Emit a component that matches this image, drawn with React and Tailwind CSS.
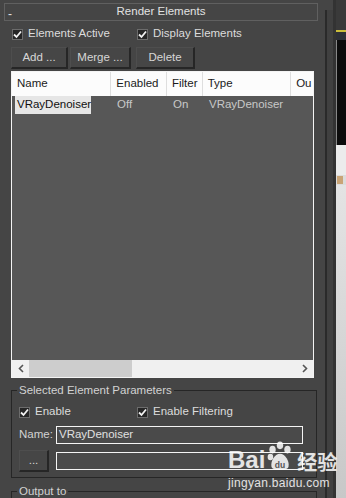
import React from 'react';

const font = { fontFamily: '"Liberation Sans", Arial, sans-serif' };

function Check({ label, className = '' }) {
  return (
    <div className={`flex items-center gap-[5px] ${className}`}>
      <div className="w-[11px] h-[11px] bg-[#262626] border border-[#6c6c6c] flex items-center justify-center">
        <svg width="9" height="9" viewBox="0 0 9 9">
          <path d="M1 4.5 L3.5 7 L8 1.5" stroke="#f2f2f2" strokeWidth="1.8" fill="none" />
        </svg>
      </div>
      <span className="text-[11.5px] text-[#dcdcdc] leading-none">{label}</span>
    </div>
  );
}

function Btn({ children, className = '' }) {
  return (
    <div className={`h-[22px] bg-[#464646] border-r-2 border-b-2 border-[#262626] border-t border-l border-t-[#4e4e4e] border-l-[#4e4e4e] flex items-center justify-center text-[11.5px] text-[#d6d6d6] ${className}`}>
      {children}
    </div>
  );
}

const cols = [
  { name: 'Name', w: 'w-[100px]' },
  { name: 'Enabled', w: 'w-[56px]' },
  { name: 'Filter', w: 'w-[36px]' },
  { name: 'Type', w: 'w-[89px]' },
  { name: 'Ou', w: 'w-[22px]' },
];

export default function App() {
  return (
    <div className="w-[346px] h-[498px] bg-[#454545] flex overflow-hidden relative" style={font}>
      <div className="w-[325px] shrink-0 flex flex-col [&>*]:shrink-0">
        {/* rollout header */}
        <div className="mt-[3px] ml-[4px] w-[314px] h-[18px] border border-[#606060] flex items-center relative">
          <span className="absolute left-[3px] top-[1px] text-[12px] text-[#e0e0e0]">-</span>
          <span className="w-full text-center text-[11.5px] text-[#e2e2e2]">Render Elements</span>
        </div>

        <div className="flex items-center mt-[7px] h-[12px] pl-[12px]">
          <Check label="Elements Active" className="w-[125px]" />
          <Check label="Display Elements" />
        </div>

        <div className="flex mt-[7px] pl-[11px]">
          <Btn className="w-[57px]">Add ...</Btn>
          <Btn className="w-[61px] ml-[2px]">Merge ...</Btn>
          <Btn className="w-[59px] ml-[5px]">Delete</Btn>
        </div>

        {/* list */}
        <div className="ml-[11px] mt-[2px] w-[303px] h-[307px] border border-[#f4f4f4] bg-[#575757] flex flex-col">
          <div className="h-[24px] bg-[#fcfcfc] flex">
            {cols.map((c, i) => (
              <div
                key={c.name}
                className={`${c.w} ${i < cols.length - 1 ? 'border-r border-[#dedede]' : ''} pl-[5px] flex items-center text-[11.5px] text-[#1a1a1a] overflow-hidden whitespace-nowrap`}
              >
                {c.name}
              </div>
            ))}
          </div>
          <div className="h-[18px] flex items-center text-[11.5px] text-[#c8c8c8]">
            <div className="w-[100px] pl-[3px] h-full flex items-center">
              <span className="bg-[#e6e6e6] text-[#111] h-full flex items-center px-[2px] w-[76px]">VRayDenoiser</span>
            </div>
            <div className="w-[56px] pl-[5px]">Off</div>
            <div className="w-[36px] pl-[5px]">On</div>
            <div className="w-[89px] pl-[5px]">VRayDenoiser</div>
          </div>
          <div className="flex-1" />
          <div className="h-[17px] bg-[#f0f0f0] flex items-center">
            <div className="w-[17px] flex justify-center">
              <svg width="6" height="9" viewBox="0 0 6 9"><path d="M5 1 L1.5 4.5 L5 8" stroke="#555" strokeWidth="1.6" fill="none" /></svg>
            </div>
            <div className="w-[103px] h-full bg-[#cdcdcd]" />
            <div className="flex-1" />
            <div className="w-[17px] flex justify-center">
              <svg width="6" height="9" viewBox="0 0 6 9"><path d="M1 1 L4.5 4.5 L1 8" stroke="#555" strokeWidth="1.6" fill="none" /></svg>
            </div>
          </div>
        </div>

        {/* selected element parameters */}
        <div className="ml-[11px] mt-[12px] w-[306px] h-[88px] border border-[#262626] relative">
          <span className="absolute -top-[8px] left-[5px] px-[2px] bg-[#454545] text-[11.5px] leading-[14px] text-[#d2d2d2]">Selected Element Parameters</span>
          <div className="flex items-center mt-[15px] pl-[7px] h-[12px]">
            <Check label="Enable" className="w-[118px]" />
            <Check label="Enable Filtering" />
          </div>
          <div className="flex items-center mt-[8px] pl-[7px]">
            <span className="w-[37px] text-[11.5px] text-[#d2d2d2]">Name:</span>
            <div className="w-[247px] h-[18px] border border-[#f4f4f4] bg-[#4a4a4a] flex items-center pl-[2px] text-[11.5px] text-[#e0e0e0]">VRayDenoiser</div>
          </div>
          <div className="flex items-center mt-[6px] pl-[7px]">
            <Btn className="w-[30px] h-[19px] mr-[7px]">...</Btn>
            <div className="w-[247px] h-[18px] border border-[#f4f4f4] bg-[#4a4a4a]" />
          </div>
        </div>

        {/* output to */}
        <div className="ml-[11px] mt-[13px] w-[306px] h-[40px] border border-[#262626] relative">
          <span className="absolute -top-[8px] left-[5px] px-[2px] bg-[#454545] text-[11.5px] leading-[14px] text-[#d2d2d2]">Output to</span>
        </div>
      </div>

      {/* right strip */}
      <div className="flex w-[21px] shrink-0">
        <div className="w-[8px] h-full flex flex-col">
          <div className="h-[10px]" />
          <div className="flex-1 border-l-2 border-[#2a2a2a] bg-[#404040]" />
        </div>
        <div className="w-[3px] bg-[#333]" />
        <div className="w-[10px] flex flex-col">
          <div className="h-[30px] bg-[#3a3a3a]" />
          <div className="h-[2px] bg-[#cbbd3a]" />
          <div className="h-[8px] bg-[#2e3038]" />
          <div className="h-[105px] bg-[#0c0c0c] border-l border-[#888]" />
          <div className="h-[30px] bg-[#ececec]" />
          <div className="h-[10px] bg-[#dcdcdc] flex items-center pl-[1px]">
            <div className="w-[6px] h-[8px] bg-[#c9a476]" />
          </div>
          <div className="flex-1 bg-gradient-to-b from-[#e4e4e4] to-[#c8c8c8]" />
        </div>
      </div>

      {/* watermark */}
      <div className="absolute left-[228px] top-[440px] flex flex-col items-start pointer-events-none">
        <div className="flex items-end text-white/85 font-bold leading-none">
          <span className="text-[24px]">Bai</span>
          <svg width="28" height="32" viewBox="0 0 26 30" className="mx-[1px]">
            <g fill="rgba(255,255,255,0.85)">
              <ellipse cx="6" cy="9" rx="3" ry="3.6" />
              <ellipse cx="13" cy="5" rx="3" ry="3.6" />
              <ellipse cx="20" cy="9" rx="3" ry="3.6" />
              <ellipse cx="4" cy="16" rx="2.6" ry="3" />
              <path d="M13 13 C8 13 4 20 5 25 C6 29 20 29 21 25 C22 20 18 13 13 13 Z" />
            </g>
            <text x="13" y="26" textAnchor="middle" fontSize="8" fill="#555" fontFamily="Liberation Sans, Arial, sans-serif" fontWeight="bold">du</text>
          </svg>
          <span className="text-[20px] ml-[2px]" style={{ fontFamily: '"Noto Sans CJK SC", sans-serif' }}>经验</span>
        </div>
        <span className="text-[12px] text-white/85 mt-[2px] tracking-[0.3px]">jingyan.baidu.com</span>
      </div>
    </div>
  );
}
